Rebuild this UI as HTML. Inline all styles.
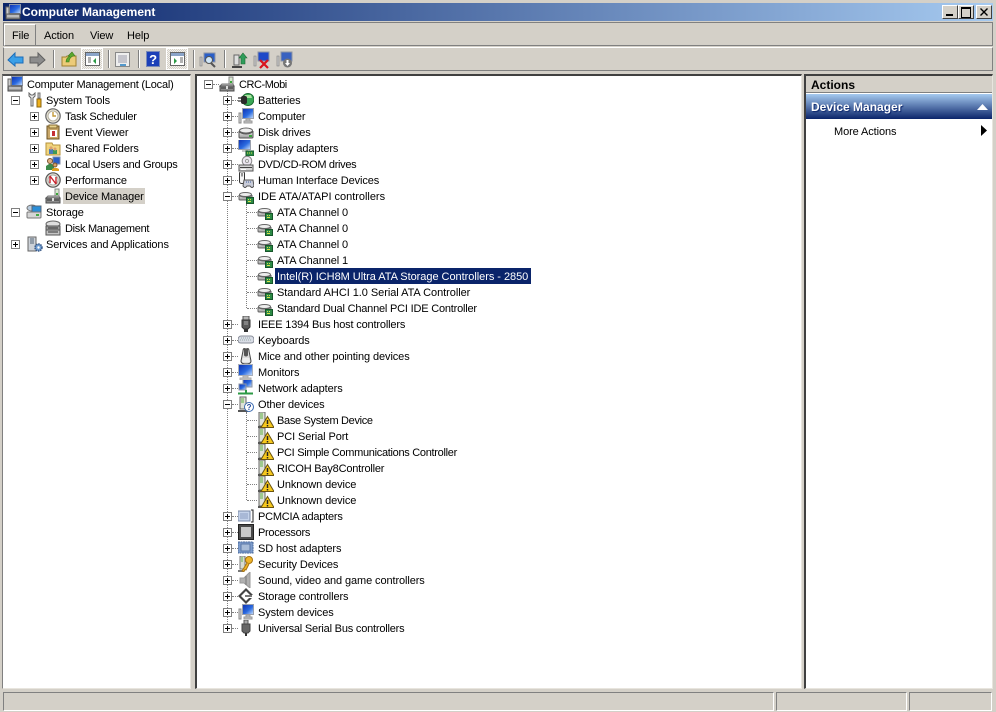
<!DOCTYPE html>
<html><head><meta charset="utf-8"><title>Computer Management</title>
<style>
html,body{margin:0;padding:0}
body{width:996px;height:712px;overflow:hidden;background:#d4d0c8;position:relative;font:11px/16px "Liberation Sans",sans-serif;letter-spacing:-.1px;color:#000}
div,svg,span{position:absolute}
.t{white-space:nowrap;height:16px;margin-top:1px}
.pane{background:#fff;border-right:1px solid #e8e5de;border-bottom:1px solid #e8e5de;box-sizing:border-box}
.v{border-left:1px dotted #808080;width:0}
.h{border-top:1px dotted #808080;height:0}
svg{width:16px;height:16px;overflow:visible}
svg.b{width:9px;height:9px}
.st{top:692px;height:19px;box-sizing:border-box;border-top:1px solid #808080;border-left:1px solid #808080;border-right:1px solid #fff;border-bottom:1px solid #fff}
.sep{width:1px;height:18px;top:50px;background:#808080;border-right:1px solid #fff}
.wb{top:5px;width:16px;height:14px;box-sizing:border-box;background:#d4d0c8;border:1px solid;border-color:#fff #404040 #404040 #fff}
.m{top:27px}
b{font-size:12px;letter-spacing:0;position:relative;top:-1px}
</style></head><body>
<svg style="width:0;height:0;left:0;top:0"><defs>
<linearGradient id="sc" x1="0" y1="0" x2="1" y2="1"><stop offset="0" stop-color="#0d2fb0"/><stop offset=".55" stop-color="#2a6ae0"/><stop offset="1" stop-color="#cfe4fb"/></linearGradient>
<linearGradient id="met" x1="0" y1="0" x2="0" y2="1"><stop offset="0" stop-color="#f0f0f0"/><stop offset="1" stop-color="#9a9a9a"/></linearGradient>
<symbol id="p" viewBox="0 0 9 9"><rect x=".5" y=".5" width="8" height="8" fill="#fff" stroke="#808080"/><path d="M2 4.500h5M4.500 2v5" stroke="#000"/></symbol>
<symbol id="n" viewBox="0 0 9 9"><rect x=".5" y=".5" width="8" height="8" fill="#fff" stroke="#808080"/><path d="M2 4.500h5" stroke="#000"/></symbol>
<symbol id="mgmt" viewBox="0 0 16 16"><rect x="4.500" y=".5" width="11" height="9" fill="url(#sc)" stroke="#8a94a8"/><rect x="1" y="10" width="14" height="5" fill="#9a9a9a" stroke="#4a4a4a"/><path d="M2 12h12" stroke="#ddd"/><rect x="1" y="3" width="3" height="7" fill="#ccc" stroke="#666"/></symbol>
<symbol id="tools" viewBox="0 0 16 16"><path d="M2 1v3l2 2v8h2V6l2-2V1L6 3H4z" fill="#eee" stroke="#666"/><path d="M11 1h2v5h-2z" fill="#ccc" stroke="#777"/><path d="M10 7h4v8h-4z" fill="#eeb01c" stroke="#8a6510"/></symbol>
<symbol id="clock" viewBox="0 0 16 16"><circle cx="8" cy="8" r="7.200" fill="#e9e5d8" stroke="#666" stroke-width="1.200"/><circle cx="8" cy="8" r="5" fill="#fff" stroke="#b5b09e"/><path d="M8 4v4h3" fill="none" stroke="#c49a3a" stroke-width="1.400"/></symbol>
<symbol id="event" viewBox="0 0 16 16"><rect x="2" y="2" width="12" height="13" fill="#caa86a" stroke="#6a5020"/><rect x="4" y="1" width="8" height="3" fill="#e8d28a" stroke="#856a30"/><rect x="5" y="6" width="7" height="7" fill="#fff"/><path d="M7 7h3v5H7z" fill="#c52f35"/></symbol>
<symbol id="share" viewBox="0 0 16 16"><path d="M1 3h6l1 2h7v10H1z" fill="#f2d67e" stroke="#b5923a"/><path d="M4 9h4v5H4z" fill="#4a7cb8"/><path d="M8 10h4v4H8z" fill="#3f9a55"/><circle cx="6" cy="8" r="1.600" fill="#d9a070"/><circle cx="10" cy="9" r="1.500" fill="#d9a070"/></symbol>
<symbol id="users" viewBox="0 0 16 16"><rect x="8" y="1" width="7" height="7" fill="#2a5fc8" stroke="#7f8ea8"/><circle cx="5" cy="5" r="2.500" fill="#e0b080" stroke="#7a5530"/><path d="M1 14V10l3-2h3l2 2v4z" fill="#3d8a4a"/><circle cx="10" cy="9" r="2" fill="#d7a468" stroke="#7a5530"/><path d="M7 15v-2l2-1h3l2 1v2z" fill="#e0a020"/></symbol>
<symbol id="perf" viewBox="0 0 16 16"><circle cx="8" cy="8" r="7.200" fill="#e2ddd0" stroke="#555" stroke-width="1.200"/><circle cx="8" cy="8" r="5" fill="#fff" stroke="#aaa"/><path d="M5 4l6 8M5 4v7M11 12V5" fill="none" stroke="#c8242c" stroke-width="1.400"/></symbol>
<symbol id="dm" viewBox="0 0 16 16"><rect x="10" y="1" width="4" height="7" fill="#d8e8d0" stroke="#888"/><path d="M11 5h2v2h-2z" fill="#3aa53a"/><path d="M3 8h11l1 2H1z" fill="#bbb" stroke="#777"/><rect x="1" y="10" width="14" height="5" fill="#8b8b8b" stroke="#4d4d4d"/><path d="M2 12h12" stroke="#333"/><path d="M7 10h2v3H7z" fill="#ddd"/></symbol>
<symbol id="storage" viewBox="0 0 16 16"><ellipse cx="6" cy="4" rx="5" ry="3" fill="#bcd" stroke="#777"/><rect x="6" y="2" width="9" height="6" fill="#2b8ed8" stroke="#567"/><rect x="1" y="8" width="14" height="6" rx="1" fill="#d5d5d5" stroke="#777"/><path d="M10 11h3" stroke="#4a4" stroke-width="2"/></symbol>
<symbol id="disk" viewBox="0 0 16 16"><ellipse cx="8" cy="4" rx="7" ry="3" fill="#ddd" stroke="#666"/><path d="M1 6h14v4H1z" fill="#999" stroke="#555"/><path d="M1 10h14v5H1z" fill="#c5c5c5" stroke="#555"/><path d="M3 12h10M3 8h10" stroke="#333"/></symbol>
<symbol id="svc" viewBox="0 0 16 16"><rect x="1" y="1" width="8" height="14" fill="#cdd2d8" stroke="#666"/><path d="M3 3h4M3 5h4M3 7h4" stroke="#567"/><circle cx="11.500" cy="11.500" r="3.500" fill="#6d9bd0" stroke="#3a5a88" stroke-width="1.500" stroke-dasharray="1.500 .8"/><circle cx="11.500" cy="11.500" r="1.200" fill="#fff"/></symbol>
<symbol id="batt" viewBox="0 0 16 16"><circle cx="10" cy="7.500" r="6" fill="#3aa856" stroke="#1c6a30"/><path d="M7 3h6l1 3H6z" fill="#a8e4a0"/><path d="M0 6h4M0 9h4" stroke="#555" stroke-width="1.400"/><rect x="3" y="4" width="6" height="8" rx="2" fill="#2a2a2a"/></symbol>
<symbol id="comp" viewBox="0 0 16 16"><path d="M1 5h2v10H1z" fill="#ddd" stroke="#888"/><rect x="4.500" y=".5" width="11" height="10" fill="url(#sc)" stroke="#9aa0ad"/><path d="M8 11h4v2H8zM6 13h8v2H6z" fill="#c8c8c8" stroke="#999"/></symbol>
<symbol id="hdd" viewBox="0 0 16 16"><ellipse cx="8" cy="6.500" rx="6.500" ry="2.500" fill="#eee" stroke="#666"/><path d="M1 7v6a1 1 0 001 1h12a1 1 0 001-1V7c0 1-3 3-7 3S1 8 1 7z" fill="url(#met)" stroke="#555"/><path d="M11 11h3v2h-3z" fill="#3aa53a"/></symbol>
<symbol id="disp" viewBox="0 0 16 16"><rect x=".5" y="-.5" width="12" height="10" fill="url(#sc)" stroke="#9aa0ad"/><path d="M4 10h6v2H4z" fill="#c8c8c8"/><path d="M8 11h8v5H8z" fill="#2c8a45" stroke="#16552a"/><path d="M9 13h1M11 13h1M13 13h1" stroke="#d8e14a"/></symbol>
<symbol id="dvd" viewBox="0 0 16 16"><circle cx="9" cy="5" r="4.800" fill="#ece6f0" stroke="#888"/><circle cx="9" cy="5" r="1.500" fill="#fff" stroke="#999"/><rect x="1" y="9" width="14" height="6" fill="#d6d6d6" stroke="#555"/><path d="M2 11.500h12" stroke="#444"/><path d="M3 13.500h5" stroke="#fff"/></symbol>
<symbol id="hid" viewBox="0 0 16 16"><rect x="1.500" y="-.5" width="5" height="12" rx="2" fill="#f4f4f4" stroke="#333"/><path d="M4 .5v4" stroke="#333"/><path d="M6 8h9l1 6-2 2-2-2H9l-2 2-2-2z" fill="#c9ccd8" stroke="#555"/><path d="M8 10h1M10 10h1M12 10h1" stroke="#4060a0"/></symbol>
<symbol id="ide" viewBox="0 0 16 16"><ellipse cx="7.500" cy="6.500" rx="6" ry="2" fill="#eee" stroke="#666"/><path d="M1 7v4a1 1 0 001 1h11a1 1 0 001-1V7c0 1-3 2-6.500 2S1 8 1 7z" fill="url(#met)" stroke="#666"/><rect x="8.500" y="9.500" width="7" height="6" fill="#2c8a45" stroke="#16552a"/><path d="M10 11.500h1M12 11.500h1M10 13.500h3" stroke="#d8e14a"/></symbol>
<symbol id="ieee" viewBox="0 0 16 16"><path d="M5 0h6v4H5z" fill="#b5b5b5" stroke="#555"/><path d="M4 4h8v7l-2 2H6l-2-2z" fill="#5a5a5a" stroke="#333"/><path d="M6 6h4M6 8h4" stroke="#aaa"/><path d="M6 13h4v3H6z" fill="#333"/></symbol>
<symbol id="kbd" viewBox="0 0 16 16"><path d="M3 4h10c2 0 3 2 3 4s-1 3-3 3H3c-2 0-3-1-3-3s1-4 3-4z" fill="#d9dde6" stroke="#8a8f9a"/><path d="M3 6h10M2 8h12" stroke="#9aa" stroke-dasharray="1 1"/></symbol>
<symbol id="mouse" viewBox="0 0 16 16"><path d="M5 3c0-2 1-3 3-3s3 1 3 3l2 10c0 2-2 3-5 3s-5-1-5-3z" fill="#dcdcdc" stroke="#444"/><path d="M6 1h4v6c0 2-4 2-4 0z" fill="#555"/><path d="M5 10h6l1 4H4z" fill="#eee"/></symbol>
<symbol id="mon" viewBox="0 0 16 16"><rect x=".5" y=".5" width="14" height="11" fill="url(#sc)" stroke="#aab0bc"/><path d="M5 12h5v2H5zM2 14h11v2H2z" fill="#c8c8c8" stroke="#aaa"/></symbol>
<symbol id="net" viewBox="0 0 16 16"><rect x="5" y="-1" width="9" height="8" fill="url(#sc)" stroke="#8e95a3"/><rect x="1" y="4" width="7" height="6" fill="url(#sc)" stroke="#8e95a3"/><path d="M7 10h2v3H7z" fill="#2d9a45"/><path d="M0 13.500h15" stroke="#2d9a45" stroke-width="2"/></symbol>
<symbol id="oth" viewBox="0 0 16 16"><path d="M2 1h6v12H2z" fill="#dfe2d8" stroke="#666"/><path d="M3 2h3v5H3z" fill="#9ec98e"/><path d="M0 15h10" stroke="#555" stroke-width="2"/><circle cx="11" cy="11" r="4.500" fill="#fff" stroke="#3a6ab0"/><text x="11" y="14" font-size="8" font-weight="bold" text-anchor="middle" fill="#2a50a0" font-family="Liberation Sans">?</text></symbol>
<symbol id="warn" viewBox="0 0 16 16"><path d="M1 0h6v14H1z" fill="#dfe2d8" stroke="#666"/><path d="M2 1h3v6H2z" fill="#9ec98e"/><path d="M0 15h7" stroke="#555" stroke-width="2"/><path d="M9.500 4.500l6.500 11H3z" fill="#f6c81e" stroke="#6a5410"/><path d="M9.500 8v4M9.500 13v1.500" stroke="#222" stroke-width="1.500"/></symbol>
<symbol id="pcm" viewBox="0 0 16 16"><path d="M0 3h12v10H0z" fill="#c4d2ea" stroke="#7a8aa8"/><path d="M2 5h8v6H2z" fill="#a8b8d6"/><path d="M13 2h2v12h-2" fill="none" stroke="#222"/></symbol>
<symbol id="cpu" viewBox="0 0 16 16"><rect x=".5" y=".5" width="15" height="15" fill="#4a4a4a" stroke="#222"/><rect x="3" y="3" width="10" height="10" fill="#c8c8c8"/></symbol>
<symbol id="sd" viewBox="0 0 16 16"><rect x="0" y="2" width="15" height="11" fill="#7d9ccc" stroke="#4a6a9c" stroke-dasharray="2 .5"/><rect x="3" y="4" width="9" height="7" fill="#a8bcd8" stroke="#5a78a8"/></symbol>
<symbol id="sec" viewBox="0 0 16 16"><path d="M2 0h5v13H2z" fill="#d8dcd0" stroke="#777"/><path d="M3 1h2v5H3z" fill="#9ec98e"/><path d="M0 15h6" stroke="#777" stroke-width="2"/><circle cx="11" cy="4" r="3.500" fill="#f0b428" stroke="#a87410"/><path d="M9 7l-5 8 2 .5 1-2 1 .5 3-6" fill="#f0b428" stroke="#a87410"/></symbol>
<symbol id="snd" viewBox="0 0 16 16"><path d="M2 6h4l6-6v16l-6-5H2z" fill="#b0b0b0" stroke="#999"/><path d="M8 4v9" stroke="#777"/></symbol>
<symbol id="stc" viewBox="0 0 16 16"><path d="M8 0l8 8-8 8-8-8z" fill="#444"/><path d="M8 3l5 5-5 5-5-5z" fill="#fff"/><path d="M8 7h8v3H8z" fill="#fff"/><path d="M7 7h7v2H7z" fill="#777"/></symbol>
<symbol id="usb" viewBox="0 0 16 16"><path d="M6 0h4v4H6z" fill="#aaa" stroke="#555"/><path d="M4 4h8v7l-2 2H6l-2-2z" fill="#666" stroke="#444"/><path d="M7 13h2v3H7z" fill="#333"/></symbol>
</defs></svg>

<!-- title bar -->
<div style="left:3px;top:3px;width:990px;height:18px;background:linear-gradient(90deg,#0a246a,#a6caf0)"></div>
<svg style="left:5px;top:4px"><use href="#mgmt"/></svg>
<div class="t" style="left:22px;top:4px;color:#fff"><b>Computer Management</b></div>
<div class="wb" style="left:942px"><div style="left:3px;top:8px;width:7px;height:2px;background:#000"></div></div>
<div class="wb" style="left:958px"><div style="left:2px;top:1px;width:8px;height:8px;border:1px solid #000;border-top-width:2px"></div></div>
<div class="wb" style="left:976px"><svg style="left:3px;top:2px;width:8px;height:8px" viewBox="0 0 8 8"><path d="M.5.500l7 7M7.500.500l-7 7" stroke="#000" stroke-width="1.400"/></svg></div>

<!-- menu -->
<div style="left:3px;top:22px;width:990px;height:24px;box-sizing:border-box;border:1px solid #808080"></div>
<div style="left:4px;top:24px;width:32px;height:22px;box-sizing:border-box;border:1px solid;border-color:#fff #808080 #808080 #fff"></div>
<div class="t m" style="left:12px">File</div>
<div class="t m" style="left:44px">Action</div>
<div class="t m" style="left:90px">View</div>
<div class="t m" style="left:127px">Help</div>

<!-- toolbar -->
<div style="left:3px;top:47px;width:990px;height:24px;box-sizing:border-box;border-top:1px solid #fff;border-bottom:1px solid #808080;border-left:1px solid #808080;border-right:1px solid #808080"></div>
<svg style="left:7px;top:52px" viewBox="0 0 16 16"><path d="M8 1L1 8l7 6v-3h8V5H8z" fill="#3ba0e8" stroke="#1c6cb8"/></svg>
<svg style="left:30px;top:52px" viewBox="0 0 16 16"><path d="M8 1l7 7-7 6v-3H0V5h8z" fill="#8c8c8c" stroke="#606060"/></svg>
<div class="sep" style="left:53px"></div>
<svg style="left:61px;top:51px" viewBox="0 0 16 16"><path d="M1 6h4l1-1h9v10H1z" fill="#eccb78" stroke="#a08030"/><path d="M5 11c0-3 2-5 4-6H7l4-4 3 4h-2c-2 1-4 3-4 6z" fill="#5aa82e" stroke="#3a7a1a" stroke-width=".6"/></svg>
<div style="left:81px;top:48px;width:22px;height:22px;box-sizing:border-box;border:1px solid #fff;background:repeating-conic-gradient(#d4d0c8 0 25%,#f4f2ee 0 50%) 0 0/2px 2px"></div>
<svg style="left:85px;top:52px" viewBox="0 0 16 16"><rect x=".5" y=".5" width="14" height="13" fill="#fff" stroke="#666"/><path d="M1 1h13v3H1z" fill="#8ba4c8"/><path d="M3 6h3M3 8h3M3 10h3" stroke="#666"/><path d="M11 6v6l-3-3z" fill="#2c9a45"/></svg>
<div class="sep" style="left:108px"></div>
<svg style="left:115px;top:52px" viewBox="0 0 16 16"><rect x=".5" y=".5" width="14" height="14" fill="#eee" stroke="#888"/><path d="M3 4h9M3 6h9M3 8h9M3 10h9" stroke="#99a"/><path d="M5 13h6" stroke="#59c" stroke-width="2"/></svg>
<div class="sep" style="left:138px"></div>
<svg style="left:146px;top:51px" viewBox="0 0 16 16"><rect x=".5" y=".5" width="13" height="15" fill="#1b3fb8" stroke="#7a8ab8"/><text x="7" y="13" font-size="13" font-weight="bold" text-anchor="middle" fill="#fff" font-family="Liberation Sans">?</text></svg>
<div style="left:166px;top:48px;width:22px;height:22px;box-sizing:border-box;border:1px solid #fff;background:repeating-conic-gradient(#d4d0c8 0 25%,#f4f2ee 0 50%) 0 0/2px 2px"></div>
<svg style="left:170px;top:52px" viewBox="0 0 16 16"><rect x=".5" y=".5" width="14" height="13" fill="#fff" stroke="#666"/><path d="M1 1h13v3H1z" fill="#8ba4c8"/><path d="M10 6h3M10 8h3M10 10h3" stroke="#666"/><path d="M4 6v6l3-3z" fill="#2c9a45"/></svg>
<div class="sep" style="left:193px"></div>
<svg style="left:200px;top:52px" viewBox="0 0 16 16"><rect x="4" y="1" width="11" height="9" fill="#2a5fc8" stroke="#8e95a3"/><path d="M0 5h2v9H0z" fill="#ccc" stroke="#777" stroke-width=".6"/><circle cx="9" cy="8" r="3.500" fill="#cfe6f8" stroke="#555"/><path d="M11 11l4 4" stroke="#555" stroke-width="2"/></svg>
<div class="sep" style="left:224px"></div>
<svg style="left:232px;top:52px" viewBox="0 0 16 16"><path d="M2 3h5v10H2z" fill="#ddd" stroke="#666"/><path d="M0 15h10" stroke="#444" stroke-width="2"/><path d="M11 1l4 5h-2v6h-4V6H7z" fill="#2f9c5a" stroke="#1c6a30" stroke-width=".6"/></svg>
<svg style="left:254px;top:52px" viewBox="0 0 16 16"><rect x="4" y="0" width="11" height="9" fill="#1f48c8" stroke="#8e95a3"/><path d="M0 4h2v10H0z" fill="#ccc" stroke="#777" stroke-width=".6"/><path d="M6 8l8 8M14 8l-8 8" stroke="#d8141c" stroke-width="2.200"/></svg>
<svg style="left:277px;top:52px" viewBox="0 0 16 16"><rect x="4" y="0" width="11" height="9" fill="#3a62c0" stroke="#8e95a3"/><path d="M0 4h2v10H0z" fill="#ccc" stroke="#777" stroke-width=".6"/><circle cx="10.500" cy="11" r="4.500" fill="#777"/><path d="M9.500 8h2v3h1.500l-2.500 3-2.500-3h1.500z" fill="#fff"/></svg>

<!-- left pane -->
<div class="pane" style="left:2px;top:74px;width:189px;height:615px;border-top:2px solid #505050;border-left:1px solid #808080"></div>
<div style="left:63px;top:188px;width:82px;height:16px;background:#d4d0c8"></div>
<svg style="left:7px;top:76px"><use href="#mgmt"/></svg><div class="t" style="left:27px;top:76px;letter-spacing:-.21px">Computer Management (Local)</div>
<svg class="b" style="left:11px;top:96px"><use href="#n"/></svg><svg style="left:27px;top:92px"><use href="#tools"/></svg><div class="t" style="left:46px;top:92px">System Tools</div>
<svg class="b" style="left:30px;top:112px"><use href="#p"/></svg><svg style="left:45px;top:108px"><use href="#clock"/></svg><div class="t" style="left:65px;top:108px;letter-spacing:-.25px">Task Scheduler</div>
<svg class="b" style="left:30px;top:128px"><use href="#p"/></svg><svg style="left:45px;top:124px"><use href="#event"/></svg><div class="t" style="left:65px;top:124px">Event Viewer</div>
<svg class="b" style="left:30px;top:144px"><use href="#p"/></svg><svg style="left:45px;top:140px"><use href="#share"/></svg><div class="t" style="left:65px;top:140px">Shared Folders</div>
<svg class="b" style="left:30px;top:160px"><use href="#p"/></svg><svg style="left:45px;top:156px"><use href="#users"/></svg><div class="t" style="left:65px;top:156px;letter-spacing:-.28px">Local Users and Groups</div>
<svg class="b" style="left:30px;top:176px"><use href="#p"/></svg><svg style="left:45px;top:172px"><use href="#perf"/></svg><div class="t" style="left:65px;top:172px">Performance</div>
<svg style="left:45px;top:188px"><use href="#dm"/></svg><div class="t" style="left:65px;top:188px">Device Manager</div>
<svg class="b" style="left:11px;top:208px"><use href="#n"/></svg><svg style="left:26px;top:204px"><use href="#storage"/></svg><div class="t" style="left:46px;top:204px">Storage</div>
<svg style="left:45px;top:220px"><use href="#disk"/></svg><div class="t" style="left:65px;top:220px;letter-spacing:-.3px">Disk Management</div>
<svg class="b" style="left:11px;top:240px"><use href="#p"/></svg><svg style="left:27px;top:236px"><use href="#svc"/></svg><div class="t" style="left:46px;top:236px">Services and Applications</div>

<!-- middle pane -->
<div class="pane" style="left:195px;top:74px;width:607px;height:615px;border-top:2px solid #404040;border-left:2px solid #404040"></div>
<div style="left:275px;top:268px;width:256px;height:16px;background:#0a246a"></div>
<div class="v" style="left:227px;top:90px;height:538px"></div>
<div class="v" style="left:246px;top:204px;height:104px"></div>
<div class="v" style="left:246px;top:412px;height:88px"></div>
<div class="h" style="left:213px;top:84px;width:6px"></div>
<div class="h" style="left:232px;top:100px;width:6px"></div><div class="h" style="left:232px;top:116px;width:6px"></div><div class="h" style="left:232px;top:132px;width:6px"></div><div class="h" style="left:232px;top:148px;width:6px"></div><div class="h" style="left:232px;top:164px;width:6px"></div><div class="h" style="left:232px;top:180px;width:6px"></div><div class="h" style="left:232px;top:196px;width:6px"></div>
<div class="h" style="left:232px;top:324px;width:6px"></div><div class="h" style="left:232px;top:340px;width:6px"></div><div class="h" style="left:232px;top:356px;width:6px"></div><div class="h" style="left:232px;top:372px;width:6px"></div><div class="h" style="left:232px;top:388px;width:6px"></div><div class="h" style="left:232px;top:404px;width:6px"></div>
<div class="h" style="left:232px;top:516px;width:6px"></div><div class="h" style="left:232px;top:532px;width:6px"></div><div class="h" style="left:232px;top:548px;width:6px"></div><div class="h" style="left:232px;top:564px;width:6px"></div><div class="h" style="left:232px;top:580px;width:6px"></div><div class="h" style="left:232px;top:596px;width:6px"></div><div class="h" style="left:232px;top:612px;width:6px"></div><div class="h" style="left:232px;top:628px;width:6px"></div>
<div class="h" style="left:247px;top:212px;width:10px"></div><div class="h" style="left:247px;top:228px;width:10px"></div><div class="h" style="left:247px;top:244px;width:10px"></div><div class="h" style="left:247px;top:260px;width:10px"></div><div class="h" style="left:247px;top:276px;width:10px"></div><div class="h" style="left:247px;top:292px;width:10px"></div><div class="h" style="left:247px;top:308px;width:10px"></div>
<div class="h" style="left:247px;top:420px;width:10px"></div><div class="h" style="left:247px;top:436px;width:10px"></div><div class="h" style="left:247px;top:452px;width:10px"></div><div class="h" style="left:247px;top:468px;width:10px"></div><div class="h" style="left:247px;top:484px;width:10px"></div><div class="h" style="left:247px;top:500px;width:10px"></div>

<svg class="b" style="left:204px;top:80px"><use href="#n"/></svg><svg style="left:219px;top:76px"><use href="#dm"/></svg><div class="t" style="left:239px;top:76px;letter-spacing:-.45px">CRC-Mobi</div>
<svg class="b" style="left:223px;top:96px"><use href="#p"/></svg><svg style="left:238px;top:92px"><use href="#batt"/></svg><div class="t" style="left:258px;top:92px">Batteries</div>
<svg class="b" style="left:223px;top:112px"><use href="#p"/></svg><svg style="left:238px;top:108px"><use href="#comp"/></svg><div class="t" style="left:258px;top:108px">Computer</div>
<svg class="b" style="left:223px;top:128px"><use href="#p"/></svg><svg style="left:238px;top:124px"><use href="#hdd"/></svg><div class="t" style="left:258px;top:124px">Disk drives</div>
<svg class="b" style="left:223px;top:144px"><use href="#p"/></svg><svg style="left:238px;top:140px"><use href="#disp"/></svg><div class="t" style="left:258px;top:140px">Display adapters</div>
<svg class="b" style="left:223px;top:160px"><use href="#p"/></svg><svg style="left:238px;top:156px"><use href="#dvd"/></svg><div class="t" style="left:258px;top:156px;letter-spacing:-.33px">DVD/CD-ROM drives</div>
<svg class="b" style="left:223px;top:176px"><use href="#p"/></svg><svg style="left:238px;top:172px"><use href="#hid"/></svg><div class="t" style="left:258px;top:172px">Human Interface Devices</div>
<svg class="b" style="left:223px;top:192px"><use href="#n"/></svg><svg style="left:238px;top:188px"><use href="#ide"/></svg><div class="t" style="left:258px;top:188px;letter-spacing:-.02px">IDE ATA/ATAPI controllers</div>
<svg style="left:257px;top:204px"><use href="#ide"/></svg><div class="t" style="left:277px;top:204px">ATA Channel 0</div>
<svg style="left:257px;top:220px"><use href="#ide"/></svg><div class="t" style="left:277px;top:220px">ATA Channel 0</div>
<svg style="left:257px;top:236px"><use href="#ide"/></svg><div class="t" style="left:277px;top:236px">ATA Channel 0</div>
<svg style="left:257px;top:252px"><use href="#ide"/></svg><div class="t" style="left:277px;top:252px">ATA Channel 1</div>
<svg style="left:257px;top:268px"><use href="#ide"/></svg><div class="t" style="left:277px;top:268px;color:#fff;letter-spacing:-.04px">Intel(R) ICH8M Ultra ATA Storage Controllers - 2850</div>
<svg style="left:257px;top:284px"><use href="#ide"/></svg><div class="t" style="left:277px;top:284px;letter-spacing:-.05px">Standard AHCI 1.0 Serial ATA Controller</div>
<svg style="left:257px;top:300px"><use href="#ide"/></svg><div class="t" style="left:277px;top:300px;letter-spacing:-.2px">Standard Dual Channel PCI IDE Controller</div>
<svg class="b" style="left:223px;top:320px"><use href="#p"/></svg><svg style="left:238px;top:316px"><use href="#ieee"/></svg><div class="t" style="left:258px;top:316px;letter-spacing:-.17px">IEEE 1394 Bus host controllers</div>
<svg class="b" style="left:223px;top:336px"><use href="#p"/></svg><svg style="left:238px;top:332px"><use href="#kbd"/></svg><div class="t" style="left:258px;top:332px">Keyboards</div>
<svg class="b" style="left:223px;top:352px"><use href="#p"/></svg><svg style="left:238px;top:348px"><use href="#mouse"/></svg><div class="t" style="left:258px;top:348px">Mice and other pointing devices</div>
<svg class="b" style="left:223px;top:368px"><use href="#p"/></svg><svg style="left:238px;top:364px"><use href="#mon"/></svg><div class="t" style="left:258px;top:364px">Monitors</div>
<svg class="b" style="left:223px;top:384px"><use href="#p"/></svg><svg style="left:238px;top:380px"><use href="#net"/></svg><div class="t" style="left:258px;top:380px">Network adapters</div>
<svg class="b" style="left:223px;top:400px"><use href="#n"/></svg><svg style="left:238px;top:396px"><use href="#oth"/></svg><div class="t" style="left:258px;top:396px">Other devices</div>
<svg style="left:258px;top:412px"><use href="#warn"/></svg><div class="t" style="left:277px;top:412px;letter-spacing:-.32px">Base System Device</div>
<svg style="left:258px;top:428px"><use href="#warn"/></svg><div class="t" style="left:277px;top:428px">PCI Serial Port</div>
<svg style="left:258px;top:444px"><use href="#warn"/></svg><div class="t" style="left:277px;top:444px;letter-spacing:-.3px">PCI Simple Communications Controller</div>
<svg style="left:258px;top:460px"><use href="#warn"/></svg><div class="t" style="left:277px;top:460px;letter-spacing:-.2px">RICOH Bay8Controller</div>
<svg style="left:258px;top:476px"><use href="#warn"/></svg><div class="t" style="left:277px;top:476px">Unknown device</div>
<svg style="left:258px;top:492px"><use href="#warn"/></svg><div class="t" style="left:277px;top:492px">Unknown device</div>
<svg class="b" style="left:223px;top:512px"><use href="#p"/></svg><svg style="left:238px;top:508px"><use href="#pcm"/></svg><div class="t" style="left:258px;top:508px;letter-spacing:-.23px">PCMCIA adapters</div>
<svg class="b" style="left:223px;top:528px"><use href="#p"/></svg><svg style="left:238px;top:524px"><use href="#cpu"/></svg><div class="t" style="left:258px;top:524px;letter-spacing:-.3px">Processors</div>
<svg class="b" style="left:223px;top:544px"><use href="#p"/></svg><svg style="left:238px;top:540px"><use href="#sd"/></svg><div class="t" style="left:258px;top:540px">SD host adapters</div>
<svg class="b" style="left:223px;top:560px"><use href="#p"/></svg><svg style="left:238px;top:556px"><use href="#sec"/></svg><div class="t" style="left:258px;top:556px">Security Devices</div>
<svg class="b" style="left:223px;top:576px"><use href="#p"/></svg><svg style="left:238px;top:572px"><use href="#snd"/></svg><div class="t" style="left:258px;top:572px">Sound, video and game controllers</div>
<svg class="b" style="left:223px;top:592px"><use href="#p"/></svg><svg style="left:238px;top:588px"><use href="#stc"/></svg><div class="t" style="left:258px;top:588px">Storage controllers</div>
<svg class="b" style="left:223px;top:608px"><use href="#p"/></svg><svg style="left:238px;top:604px"><use href="#comp"/></svg><div class="t" style="left:258px;top:604px">System devices</div>
<svg class="b" style="left:223px;top:624px"><use href="#p"/></svg><svg style="left:238px;top:620px"><use href="#usb"/></svg><div class="t" style="left:258px;top:620px;letter-spacing:-.2px">Universal Serial Bus controllers</div>

<!-- right pane -->
<div class="pane" style="left:804px;top:74px;width:189px;height:615px;border-top:2px solid #404040;border-left:2px solid #404040"></div>
<div style="left:806px;top:76px;width:186px;height:16px;background:#d4d0c8;border-bottom:1px solid #808080"></div>
<div class="t" style="left:811px;top:77px"><b>Actions</b></div>
<div style="left:806px;top:94px;width:186px;height:25px;background:linear-gradient(180deg,#a6caf0,#0a246a)"></div>
<div class="t" style="left:811px;top:99px;color:#fff;text-shadow:1px 1px 1px #0a246a"><b>Device Manager</b></div>
<svg style="left:977px;top:104px;width:11px;height:6px" viewBox="0 0 11 6"><path d="M5.500 0L11 6H0z" fill="#fff"/></svg>
<div class="t" style="left:834px;top:123px">More Actions</div>
<svg style="left:981px;top:125px;width:6px;height:11px" viewBox="0 0 6 11"><path d="M0 0l6 5.500L0 11z" fill="#000"/></svg>

<!-- status -->
<div class="st" style="left:3px;width:771px"></div>
<div class="st" style="left:776px;width:131px"></div>
<div class="st" style="left:909px;width:83px"></div>
</body></html>
